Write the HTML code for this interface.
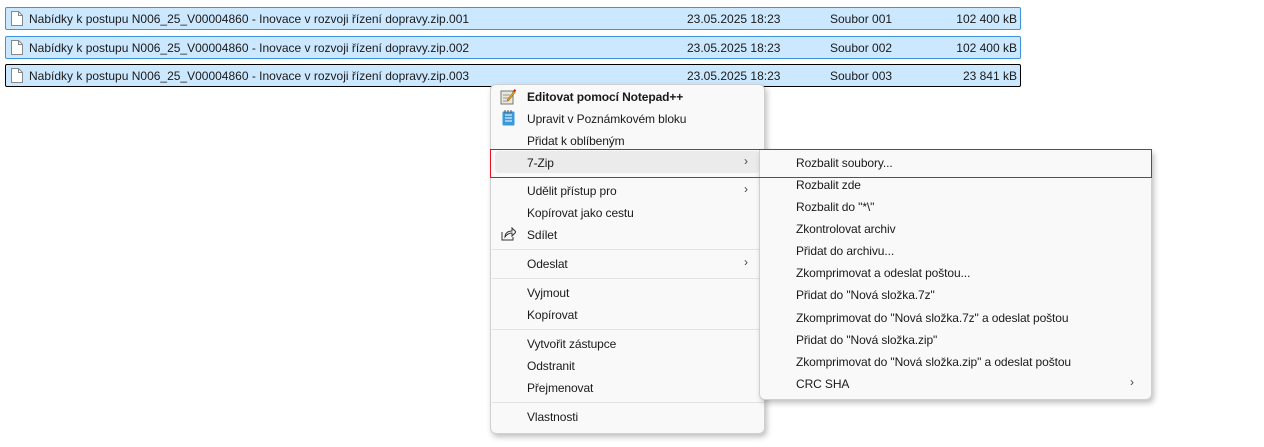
<!DOCTYPE html><html><head><meta charset="utf-8"><style>
*{margin:0;padding:0;box-sizing:border-box}
body{width:1264px;height:447px;background:#fff;position:relative;overflow:hidden;font-family:"Liberation Sans","DejaVu Sans",sans-serif;font-size:12px;color:#000}
.row{position:absolute;left:5px;width:1016px;height:23px;background:#cce8ff;border:1px solid #3d93e0;border-radius:2px}
.row.f{border-color:#000}
.row span{position:absolute;top:4px;white-space:nowrap;color:#1a1a1a}
.ic{position:absolute;left:5px;top:3px;width:12px;height:15px}
.menu{position:absolute;background:#f9f9f9;border:1px solid #d0d0d0;border-radius:6px;box-shadow:2px 3px 6px rgba(0,0,0,.25)}
.it{position:absolute;white-space:nowrap;color:#1a1a1a;letter-spacing:-0.1px}
.sep{position:absolute;height:1px;background:#e3e3e3}
.ar{position:absolute;font-size:12px;color:#444}
</style></head><body>
<div class="row" style="top:7px"><svg class="ic" viewBox="0 0 12 15"><path d="M.5.5h7l4 4v10h-11z" fill="#fff" stroke="#888"/><path d="M7.5.5v4h4" fill="none" stroke="#888"/></svg><span style="left:23px">Nabídky k postupu N006_25_V00004860 - Inovace v rozvoji řízení dopravy.zip.001</span><span style="left:681px">23.05.2025 18:23</span><span style="left:824px">Soubor 001</span><span style="right:3px">102 400 kB</span></div>
<div class="row" style="top:36px"><svg class="ic" viewBox="0 0 12 15"><path d="M.5.5h7l4 4v10h-11z" fill="#fff" stroke="#888"/><path d="M7.5.5v4h4" fill="none" stroke="#888"/></svg><span style="left:23px">Nabídky k postupu N006_25_V00004860 - Inovace v rozvoji řízení dopravy.zip.002</span><span style="left:681px">23.05.2025 18:23</span><span style="left:824px">Soubor 002</span><span style="right:3px">102 400 kB</span></div>
<div class="row f" style="top:64px"><svg class="ic" viewBox="0 0 12 15"><path d="M.5.5h7l4 4v10h-11z" fill="#fff" stroke="#888"/><path d="M7.5.5v4h4" fill="none" stroke="#888"/></svg><span style="left:23px">Nabídky k postupu N006_25_V00004860 - Inovace v rozvoji řízení dopravy.zip.003</span><span style="left:681px">23.05.2025 18:23</span><span style="left:824px">Soubor 003</span><span style="right:3px">23 841 kB</span></div>

<div class="menu" style="left:490px;top:84px;width:275px;height:350px">
<svg style="position:absolute;left:9px;top:4px" width="16" height="16" viewBox="0 0 16 16"><rect x="1" y="2" width="12" height="13" fill="#e8e8d8" stroke="#777"/><path d="M3 6h7M3 9h7M3 12h5" stroke="#999"/><path d="M7 11l7-9 1.5 1-7 9z" fill="#e0a020" stroke="#805010" stroke-width=".5"/><path d="M14 1l1.5 1" stroke="#c00" stroke-width="2"/></svg>
<div class="it" style="left:36px;top:5px;font-weight:bold">Editovat pomocí Notepad++</div>
<svg style="position:absolute;left:11px;top:25px" width="13" height="16" viewBox="0 0 13 16"><rect x=".5" y="1.5" width="12" height="14" rx="1" fill="#3a9ad9"/><path d="M3 5h7M3 8h7M3 11h7" stroke="#fff"/><path d="M3 0v3M6 0v3M9 0v3" stroke="#555"/></svg>
<div class="it" style="left:36px;top:27px">Upravit v Poznámkovém bloku</div>
<div class="it" style="left:36px;top:49px">Přidat k oblíbeným</div>
<div style="position:absolute;left:4px;top:66px;width:265px;height:22px;background:#ebebeb;border-radius:4px"></div>
<div class="it" style="left:36px;top:71px">7-Zip</div><div class="ar" style="left:253px;top:69px">›</div>
<div class="it" style="left:36px;top:99px">Udělit přístup pro</div><div class="ar" style="left:253px;top:97px">›</div>
<div class="it" style="left:36px;top:121px">Kopírovat jako cestu</div>
<svg style="position:absolute;left:10px;top:142px" width="15" height="14" viewBox="0 0 15 14"><path d="M1 5v8h11v-3" fill="none" stroke="#333"/><path d="M4 10c0-4 3-6 7-6V1l4 4-4 4V6c-3 0-5 1-7 4z" fill="none" stroke="#333"/></svg>
<div class="it" style="left:36px;top:143px">Sdílet</div>
<div class="sep" style="left:1px;width:272px;top:164px"></div>
<div class="it" style="left:36px;top:172px">Odeslat</div><div class="ar" style="left:253px;top:170px">›</div>
<div class="sep" style="left:1px;width:272px;top:193px"></div>
<div class="it" style="left:36px;top:201px">Vyjmout</div>
<div class="it" style="left:36px;top:223px">Kopírovat</div>
<div class="sep" style="left:1px;width:272px;top:244px"></div>
<div class="it" style="left:36px;top:252px">Vytvořit zástupce</div>
<div class="it" style="left:36px;top:274px">Odstranit</div>
<div class="it" style="left:36px;top:296px">Přejmenovat</div>
<div class="sep" style="left:1px;width:272px;top:317px"></div>
<div class="it" style="left:36px;top:325px">Vlastnosti</div>
</div>

<div class="menu" style="left:759px;top:150px;width:393px;height:250px;border-radius:0 0 6px 6px;border-top:none">
<div class="it" style="left:36px;top:6px">Rozbalit soubory...</div>
<div class="it" style="left:36px;top:28px">Rozbalit zde</div>
<div class="it" style="left:36px;top:50px">Rozbalit do "*\"</div>
<div class="it" style="left:36px;top:72px">Zkontrolovat archiv</div>
<div class="it" style="left:36px;top:94px">Přidat do archivu...</div>
<div class="it" style="left:36px;top:116px">Zkomprimovat a odeslat poštou...</div>
<div class="it" style="left:36px;top:138px">Přidat do "Nová složka.7z"</div>
<div class="it" style="left:36px;top:161px">Zkomprimovat do "Nová složka.7z" a odeslat poštou</div>
<div class="it" style="left:36px;top:183px">Přidat do "Nová složka.zip"</div>
<div class="it" style="left:36px;top:205px">Zkomprimovat do "Nová složka.zip" a odeslat poštou</div>
<div class="it" style="left:36px;top:227px">CRC SHA</div><div class="ar" style="left:370px;top:225px">›</div>
</div>
<div style="position:absolute;z-index:10;left:490px;top:149px;width:662px;height:29px;border:1px solid #e81123"></div>
</body></html>
